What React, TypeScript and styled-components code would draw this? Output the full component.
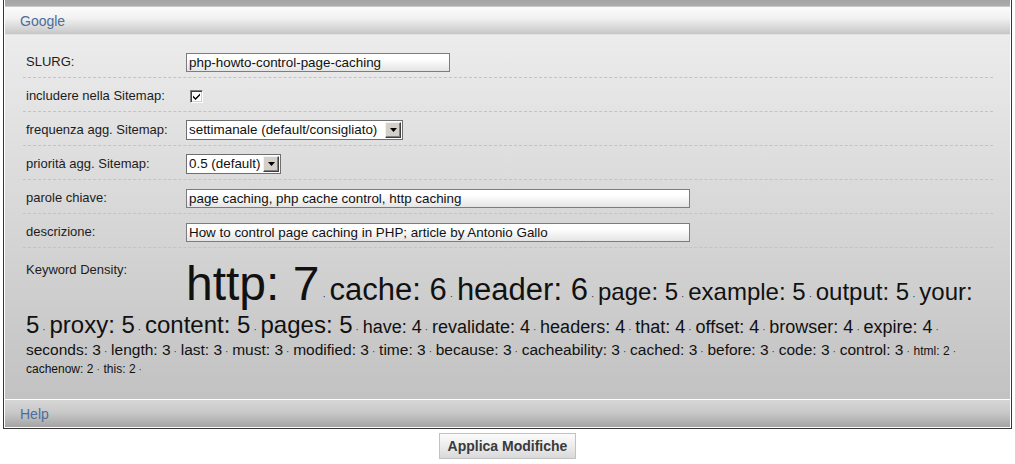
import React from 'react';
import styled, { createGlobalStyle } from 'styled-components';

const GlobalStyle = createGlobalStyle`
  html, body {
    margin: 0;
    padding: 0;
    background: #ffffff;
  }
  body {
    font-family: "Liberation Sans", Arial, sans-serif;
    font-size: 13px;
    color: #1c1c1c;
  }
`;

const Page = styled.div`
  width: 1015px;
  padding: 0 3px;
  box-sizing: border-box;
`;

const Panel = styled.div`
  border: 1px solid #363636;
  border-top: none;
  background: #ffffff;
  padding: 0 1px 1px;
`;

const TopStrip = styled.div`
  height: 6px;
  background: linear-gradient(#a4a4a4, #adadad);
  border-bottom: 1px solid #c9c9c9;
`;

const SectionBar = styled.div<{ $footer?: boolean }>`
  height: 27px;
  display: flex;
  align-items: center;
  padding-left: 15px;
  font-size: 14px;
  color: #4c6d9c;
  background: ${p => p.$footer
    ? 'linear-gradient(#d6d6d6, #c9c9c9 45%, #a4a4a4)'
    : 'linear-gradient(#fbfbfb, #f2f2f2 40%, #c7c7c7)'};
  margin-top: ${p => (p.$footer ? '1px' : '0')};
`;

const Body = styled.div`
  padding: 9px 17px 23px 18px;
  background: linear-gradient(#ececec, #c2c2c2);
  border-top: 1px solid #e2e2e2;
`;

const Row = styled.div`
  display: flex;
  align-items: flex-start;
  padding: 8px 0 5px 3px;
  border-bottom: 1px dashed #c3c3c3;
`;

const Label = styled.div`
  width: 160px;
  flex-shrink: 0;
  padding-top: 2px;
  line-height: 15px;
`;

const FieldBox = styled.div`
  height: 20px;
  display: flex;
  align-items: center;
`;

const TextBox = styled.input<{ $width: number }>`
  width: ${p => p.$width}px;
  height: 19px;
  box-sizing: border-box;
  margin: 0;
  padding: 0 2px;
  border: 1px solid #7c7c7c;
  background: linear-gradient(#ffffff, #ffffff 30%, #e4e4e4);
  font-family: "Liberation Sans", Arial, sans-serif;
  font-size: 13.4px;
  color: #111;
  outline: none;
`;

const CheckBox = styled.span`
  display: inline-block;
  width: 13px;
  height: 13px;
  margin-left: 4px;
  box-sizing: border-box;
  border-top: 1px solid #808080;
  border-left: 1px solid #808080;
  border-bottom: 1px solid #ffffff;
  border-right: 1px solid #ffffff;
  box-shadow: inset 1px 1px #404040, inset -1px -1px #d4d0c8;
  background: #ffffff;
  position: relative;

  svg {
    position: absolute;
    left: 2px;
    top: 2px;
  }
`;

const Select = styled.div<{ $width: number }>`
  width: ${p => p.$width}px;
  height: 20px;
  box-sizing: border-box;
  border: 1px solid #6f6f6f;
  background: #ffffff;
  display: flex;
  align-items: stretch;
  font-size: 13.4px;
  color: #111;
`;

const SelectText = styled.span`
  flex: 1;
  padding-left: 2px;
  line-height: 18px;
  white-space: nowrap;
  overflow: hidden;
`;

const ArrowButton = styled.span`
  width: 16px;
  margin: 1px;
  box-sizing: border-box;
  background: #d4d0c8;
  border-top: 1px solid #f2f2f2;
  border-left: 1px solid #f2f2f2;
  border-right: 1px solid #404040;
  border-bottom: 1px solid #404040;
  box-shadow: inset -1px -1px #808080;
  display: flex;
  align-items: center;
  justify-content: center;
`;

const CloudRow = styled.div`
  padding: 8px 0 0 3px;
  line-height: normal;
`;

const CloudLabel = styled.span`
  display: inline-block;
  width: 160px;
  vertical-align: top;
  padding-top: 6px;
  font-size: 13px;
`;

const Kw = styled.span<{ $size: number; $lh?: number }>`
  font-size: ${p => p.$size}px;
  line-height: ${p => (p.$lh ? `${p.$lh}px` : 'normal')};
  color: #111;
`;

const Sep = styled.span`
  font-size: 10px;
  color: #333;
  padding: 0 1px 0 3px;
`;

const Actions = styled.div`
  display: flex;
  justify-content: center;
  padding-top: 4px;
`;

const Button = styled.button`
  height: 26px;
  padding: 0 8px;
  border: 1px solid #c2c2c2;
  background: linear-gradient(#fbfbfb, #ececec 50%, #d9d9d9);
  font-family: "Liberation Sans", Arial, sans-serif;
  font-size: 14px;
  font-weight: bold;
  color: #3a3a3a;
`;

// font size (and line height) per occurrence count
const sizeFor: Record<number, [number, number?]> = {
  7: [48], 6: [31], 5: [24], 4: [18], 3: [15.5, 22], 2: [12],
};

const keywords: [string, number][] = [
  ['http', 7], ['cache', 6], ['header', 6], ['page', 5], ['example', 5], ['output', 5],
  ['your', 5], ['proxy', 5], ['content', 5], ['pages', 5], ['have', 4], ['revalidate', 4],
  ['headers', 4], ['that', 4], ['offset', 4], ['browser', 4], ['expire', 4], ['seconds', 3],
  ['length', 3], ['last', 3], ['must', 3], ['modified', 3], ['time', 3], ['because', 3],
  ['cacheability', 3], ['cached', 3], ['before', 3], ['code', 3], ['control', 3],
  ['html', 2], ['cachenow', 2], ['this', 2],
];

const Arrow = () => (
  <svg width="7" height="4" viewBox="0 0 7 4">
    <path d="M0 0h7L3.5 4z" fill="#000" />
  </svg>
);

export default function App() {
  return (
    <Page>
      <GlobalStyle />
      <Panel>
        <TopStrip />
        <SectionBar>Google</SectionBar>
        <Body>
          <Row>
            <Label>SLURG:</Label>
            <FieldBox>
              <TextBox $width={264} readOnly value="php-howto-control-page-caching" />
            </FieldBox>
          </Row>
          <Row>
            <Label>includere nella Sitemap:</Label>
            <FieldBox>
              <CheckBox>
                <svg width="7" height="7" viewBox="0 0 7 7">
                  <path d="M0 2.5l2.5 2.5L7 0.5v2L2.5 7 0 4.5z" fill="#000" />
                </svg>
              </CheckBox>
            </FieldBox>
          </Row>
          <Row>
            <Label>frequenza agg. Sitemap:</Label>
            <FieldBox>
              <Select $width={217}>
                <SelectText>settimanale (default/consigliato)</SelectText>
                <ArrowButton><Arrow /></ArrowButton>
              </Select>
            </FieldBox>
          </Row>
          <Row>
            <Label>priorità agg. Sitemap:</Label>
            <FieldBox>
              <Select $width={95}>
                <SelectText>0.5 (default)</SelectText>
                <ArrowButton><Arrow /></ArrowButton>
              </Select>
            </FieldBox>
          </Row>
          <Row>
            <Label>parole chiave:</Label>
            <FieldBox>
              <TextBox $width={504} readOnly value="page caching, php cache control, http caching" />
            </FieldBox>
          </Row>
          <Row>
            <Label>descrizione:</Label>
            <FieldBox>
              <TextBox $width={504} readOnly value="How to control page caching in PHP; article by Antonio Gallo" />
            </FieldBox>
          </Row>
          <CloudRow>
            <CloudLabel>Keyword Density:</CloudLabel>
            {keywords.map(([word, count]) => (
              <React.Fragment key={word}>
                <Kw $size={sizeFor[count][0]} $lh={sizeFor[count][1]}>{word}: {count}</Kw><Sep>· </Sep>
              </React.Fragment>
            ))}
          </CloudRow>
        </Body>
        <SectionBar $footer>Help</SectionBar>
      </Panel>
      <Actions>
        <Button>Applica Modifiche</Button>
      </Actions>
    </Page>
  );
}
